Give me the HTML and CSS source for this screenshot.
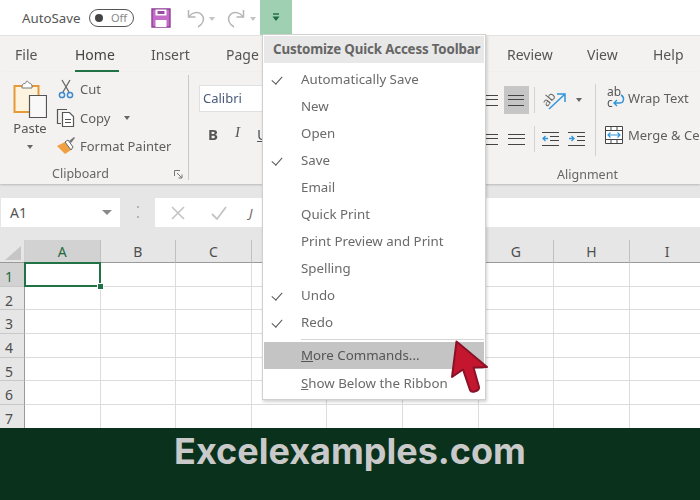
FILE: index.html
```html
<!DOCTYPE html>
<html lang="en">
<head>
<meta charset="utf-8">
<title>Customize Quick Access Toolbar</title>
<link rel="stylesheet" href="styles.css">
</head>
<body>
<div class="app">
  <header class="qat">
    <span class="autosave">AutoSave</span>
    <span class="toggle"><i class="knob"></i><span>Off</span></span>
    <svg class="save" width="20" height="20" viewBox="0 0 20 20"><path d="M1 1h18v18H1z" fill="#c46cc8" stroke="#8d3f95" stroke-width="1.4"/><path d="M4.500 1.500h11v6h-11z" fill="#fff"/><path d="M4.500 12h11v7h-11z" fill="#fff"/><path d="M6.500 3h7v3h-7z" fill="#9a4ca2"/></svg>
    <svg class="undo" width="18" height="20" viewBox="0 0 18 20" fill="none" stroke="#b5b5b5" stroke-width="1.500"><path d="M1.500 2v7h7"/><path d="M2 9c3-5 10-6 13-2s1 9-4 12"/></svg>
    <i class="caret light"></i>
    <svg class="redo" width="18" height="20" viewBox="0 0 18 20" fill="none" stroke="#b5b5b5" stroke-width="1.500"><path d="M16.500 2v7h-7"/><path d="M16 9c-3-5-10-6-13-2s-1 9 4 12"/></svg>
    <i class="caret light"></i>
    <span class="qat-btn"><svg width="8" height="9" viewBox="0 0 8 9"><path d="M1 1h6" stroke="#1d6b3f" stroke-width="1.400"/><path d="M.5 3.500h7L4 8z" fill="#1d6b3f"/></svg></span>
  </header>

  <nav class="tabs">
    <span class="tab t-file">File</span>
    <span class="tab t-home">Home</span>
    <span class="tab t-insert">Insert</span>
    <span class="tab t-page">Page</span>
    <span class="tab t-review">Review</span>
    <span class="tab t-view">View</span>
    <span class="tab">Help</span>
  </nav>

  <section class="ribbon">
    <div class="group clipboard">
      <div class="group-body">
        <div class="paste">
          <svg width="34" height="38" viewBox="0 0 34 38"><path d="M1.500 6h24v26h-24z" fill="#fdf3df" stroke="#e59a37" stroke-width="2"/><path d="M9 6c0-2 2-2.500 3-2.500S13 1 14 1s2 2.500 3 2.500 2 1 2 2.500v2H9z" fill="#fff" stroke="#777" stroke-width="1"/><path d="M16.500 15.500h17v22h-17z" fill="#f8f8f8" stroke="#555" stroke-width="1.200"/></svg>
          <span class="paste-label">Paste</span>
          <i class="caret"></i>
        </div>
        <div class="clip-list">
          <div class="clip-row"><svg class="ci" width="20" height="20" viewBox="0 0 20 20" fill="none"><path d="M6 1l7 12M14 1L7 13" stroke="#666" stroke-width="1.300"/><circle cx="6" cy="16" r="2.600" stroke="#3b8ad0" stroke-width="1.500"/><circle cx="14" cy="16" r="2.600" stroke="#3b8ad0" stroke-width="1.500"/></svg><span>Cut</span></div>
          <div class="clip-row"><svg class="ci" width="20" height="20" viewBox="0 0 20 20" fill="none" stroke="#555" stroke-width="1.200"><path d="M5 15.500H1.500v-14H11"/><path d="M6.500 4.500h7l4 4v10h-11z" fill="#fff"/><path d="M9 11.500h6M9 14.500h6" stroke-width="1"/></svg><span>Copy</span><i class="caret copy-caret"></i></div>
          <div class="clip-row"><svg class="ci" width="20" height="20" viewBox="0 0 20 20"><path d="M1 10l8-4 6 8-6 4z" fill="#f0a040"/><path d="M9 6l6 8 2-3-5-7z" fill="#fff" stroke="#666"/><path d="M13 5l5-4 1 1-4 5z" fill="#777"/></svg><span>Format Painter</span></div>
        </div>
      </div>
      <div class="group-label">Clipboard<svg class="launcher" width="9" height="9" viewBox="0 0 9 9" fill="none" stroke="#777"><path d="M.5 6V.5H6"/><path d="M3 3l5 5M8 4.500V8H4.500"/></svg></div>
    </div>

    <div class="group font">
      <div class="font-box">Calibri</div>
      <div class="font-btns"><b>B</b><i>I</i><u>U</u></div>
    </div>

    <div class="group alignment">
      <div class="align-body">
        <div class="align-grid">
          <span class="ai"><i class="l3"></i></span>
          <span class="ai sel"><i class="l3"></i></span>
          <span class="vsep"></span>
          <span class="orient"><svg class="free" width="30" height="24" viewBox="0 0 30 24" fill="none"><text x="0" y="16" class="ab" transform="rotate(-50 6 12)">ab</text><path d="M7 21L22 7M15 6h8v8" stroke="#2f95dc" stroke-width="1.500"/></svg><i class="caret"></i></span>
          <span class="ai"><i class="l3"></i></span>
          <span class="ai"><i class="l3 wide"></i></span>
          <span class="vsep"></span>
          <span class="indents">
            <svg width="17" height="16" viewBox="0 0 17 16" fill="none" stroke="#444"><path d="M0 1.500h17M8 5.500h9M8 9.500h9M0 14.500h17"/><path d="M6 7.500H1M3.500 5L1 7.500 3.500 10" stroke="#2f95dc" stroke-width="1.300"/></svg>
            <svg width="17" height="16" viewBox="0 0 17 16" fill="none" stroke="#444"><path d="M0 1.500h17M9 5.500h8M9 9.500h8M0 14.500h17"/><path d="M1 7.500h5M3.500 5L6 7.500 3.500 10" stroke="#2f95dc" stroke-width="1.300"/></svg>
          </span>
        </div>
        <div class="wrap-col">
          <div class="wrap-row"><svg class="free" width="18" height="22" viewBox="0 0 18 22" fill="none"><text x="0" y="9" class="abc">ab</text><text x="0" y="20" class="abc">c</text><path d="M14 8c4 2 3 8-1 8H7M10 13l-3 3 3 3" stroke="#2f95dc" stroke-width="1.400"/></svg><span>Wrap Text</span></div>
          <div class="wrap-row merge"><svg width="18" height="18" viewBox="0 0 18 18" fill="none"><path d="M.5.500h17v17H.5z" fill="#fff" stroke="#444"/><path d="M.5 4.500h17M.5 13.500h17M6 .5v4M12 .5v4M6 13.500v4M12 13.500v4" stroke="#444"/><path d="M3 9h12M5.500 6.500L3 9l2.500 2.500M12.500 6.500L15 9l-2.500 2.500" stroke="#2f95dc" stroke-width="1.200"/></svg><span>Merge &amp; Center</span></div>
        </div>
      </div>
      <div class="group-label">Alignment</div>
    </div>
  </section>

  <section class="formula">
    <div class="namebox"><span>A1</span><i class="caret dark"></i></div>
    <span class="dots"></span>
    <div class="fx">
      <svg width="14" height="14" viewBox="0 0 14 14" stroke="#c4c4c4" stroke-width="1.600" fill="none"><path d="M1 1l12 12M13 1L1 13"/></svg>
      <svg width="16" height="14" viewBox="0 0 16 14" stroke="#c4c4c4" stroke-width="1.800" fill="none"><path d="M1 8l5 5L15 1"/></svg>
      <span class="fx-j">J</span>
    </div>
  </section>

  <section class="sheet">
    <div class="corner"><svg width="16" height="14" viewBox="0 0 16 14"><path d="M16 0v14H0z" fill="#c6c6c6"/></svg></div>
    <div class="ch sel">A</div><div class="ch">B</div><div class="ch">C</div><div class="ch"></div><div class="ch"></div><div class="ch"></div><div class="ch">G</div><div class="ch">H</div><div class="ch">I</div>

    <div class="rh sel">1</div><div class="c active"></div><div class="c"></div><div class="c"></div><div class="c"></div><div class="c"></div><div class="c"></div><div class="c"></div><div class="c"></div><div class="c"></div>
    <div class="rh">2</div><div class="c"></div><div class="c"></div><div class="c"></div><div class="c"></div><div class="c"></div><div class="c"></div><div class="c"></div><div class="c"></div><div class="c"></div>
    <div class="rh">3</div><div class="c"></div><div class="c"></div><div class="c"></div><div class="c"></div><div class="c"></div><div class="c"></div><div class="c"></div><div class="c"></div><div class="c"></div>
    <div class="rh">4</div><div class="c"></div><div class="c"></div><div class="c"></div><div class="c"></div><div class="c"></div><div class="c"></div><div class="c"></div><div class="c"></div><div class="c"></div>
    <div class="rh">5</div><div class="c"></div><div class="c"></div><div class="c"></div><div class="c"></div><div class="c"></div><div class="c"></div><div class="c"></div><div class="c"></div><div class="c"></div>
    <div class="rh">6</div><div class="c"></div><div class="c"></div><div class="c"></div><div class="c"></div><div class="c"></div><div class="c"></div><div class="c"></div><div class="c"></div><div class="c"></div>
    <div class="rh">7</div><div class="c"></div><div class="c"></div><div class="c"></div><div class="c"></div><div class="c"></div><div class="c"></div><div class="c"></div><div class="c"></div><div class="c"></div>
  </section>

  <aside class="menu">
    <div class="menu-head">Customize Quick Access Toolbar</div>
    <ul class="menu-list">
      <li class="on">Automatically Save</li>
      <li>New</li>
      <li>Open</li>
      <li class="on">Save</li>
      <li>Email</li>
      <li>Quick Print</li>
      <li>Print Preview and Print</li>
      <li>Spelling</li>
      <li class="on">Undo</li>
      <li class="on">Redo</li>
      <li class="sep"></li>
      <li class="hot"><u>M</u>ore Commands...</li>
      <li class="last"><u>S</u>how Below the Ribbon</li>
    </ul>
  </aside>

  <svg class="pointer" width="40" height="56" viewBox="0 0 40 56"><path d="M7.500 1.500L3 37l11-7.500 7 20.500c1.500 3.500 9.500 1 9-3l-5.500-19.500 13.500-.5z" fill="#c4162f" stroke="#8a1226" stroke-width="2" stroke-linejoin="round"/></svg>
</div>
<footer class="brand">Excelexamples.com</footer>
</body>
</html>
```
FILE: styles.css
```css
* { box-sizing: border-box; }
html, body { margin: 0; padding: 0; }
body {
  width: 700px;
  height: 500px;
  overflow: hidden;
  font-family: "Noto Sans", "Liberation Sans", sans-serif;
  color: #555;
  background: #fff;
}
.app {
  position: relative;
  height: 428px;
  overflow: hidden;
  display: flex;
  flex-direction: column;
  filter: blur(0.35px);
}
.free { overflow: visible; }
.caret {
  display: inline-block;
  width: 0;
  height: 0;
  border-left: 3.5px solid transparent;
  border-right: 3.5px solid transparent;
  border-top: 4px solid #666;
}
.caret.light { border-top-color: #c4c4c4; }
.caret.dark { border-left-width: 5px; border-right-width: 5px; border-top-width: 5px; border-top-color: #8a8a8a; }

/* Quick access toolbar */
.qat {
  height: 35px;
  flex: none;
  display: flex;
  align-items: center;
  padding-left: 22px;
  font-size: 13.300px;
  background: #fff;
}
.autosave { width: 67px; color: #555; }
.toggle {
  width: 45px;
  height: 18px;
  border: 1.5px solid #555;
  border-radius: 9px;
  display: flex;
  align-items: center;
  padding-left: 5px;
  gap: 8px;
  font-size: 11px;
  color: #888;
}
.knob { width: 8px; height: 8px; border-radius: 50%; background: #444; }
.save { margin-left: 17px; margin-top: 1px; }
.undo { margin-left: 16px; }
.qat .caret { margin: 2px 0 0 4px; }
.redo { margin-left: 12px; }
.qat .redo + .caret { margin-left: 5px; }
.qat-btn {
  width: 32px;
  height: 35px;
  margin-left: 4px;
  background: #9fd0b1;
  display: flex;
  align-items: center;
  justify-content: center;
}

/* Tabs */
.tabs {
  height: 37px;
  flex: none;
  display: flex;
  align-items: center;
  padding: 2px 0 0 15px;
  font-size: 14px;
  line-height: 20px;
  background: #f3f2f1;
  border-top: 1px solid #e2e2e2;
  white-space: nowrap;
}
.tab { display: block; position: relative; }
.t-file { width: 60px; }
.t-home { width: 76px; color: #444; }
.t-home::after {
  content: "";
  position: absolute;
  left: 0;
  width: 44px;
  top: 25px;
  height: 3px;
  background: #217346;
}
.t-insert { width: 75px; }
.t-page { width: 281px; }
.t-review { width: 80px; }
.t-view { width: 66px; }

/* Ribbon */
.ribbon {
  height: 112px;
  flex: none;
  display: flex;
  background: #f3f2f1;
  box-shadow: 0 1px 2px rgba(0, 0, 0, .2);
  position: relative;
}
.group { display: flex; flex-direction: column; }
.group-body { flex: 1; display: flex; padding-left: 13px; }
.group-label {
  height: 22px;
  margin-bottom: -1px;
  display: flex;
  align-items: center;
  justify-content: center;
  font-size: 12.500px;
  color: #666;
  position: relative;
}
.clipboard {
  width: 189px;
  flex: none;
  border-right: 1.500px solid #c8c8c8;
  margin: 3px 0 4px;
}
.clipboard .group-label { margin-bottom: -4px; padding-right: 27px; }
.launcher { position: absolute; right: 5px; top: 8px; }
.paste {
  width: 34px;
  display: flex;
  flex-direction: column;
  align-items: center;
  padding-top: 5px;
}
.paste svg { flex: none; }
.paste-label { font-size: 13px; line-height: 18px; margin-top: 1px; }
.paste .caret { margin-top: 8px; }
.clip-list {
  margin-left: 9px;
  display: flex;
  flex-direction: column;
}
.clip-row {
  height: 28.500px;
  display: flex;
  align-items: center;
  font-size: 13px;
  color: #5e5e5e;
}
.ci { margin-right: 4px; flex: none; }
.copy-caret { margin-left: 14px; }
.font { width: 286px; flex: none; padding: 13px 0 0 10px; }
.font-box {
  width: 100px;
  height: 27px;
  background: #fff;
  border: 1px solid #e0e0e0;
  font-size: 13px;
  line-height: 25px;
  padding-left: 3px;
  color: #4a5a78;
}
.font-btns {
  display: flex;
  gap: 17px;
  padding: 12px 0 0 9px;
  font-size: 15px;
  color: #555;
}
.font-btns i { font-family: "Liberation Serif", serif; }

.alignment { flex: 1; min-width: 0; }
.align-body { flex: 1; display: flex; padding-top: 12px; }
.alignment .group-label { width: 225px; }
.align-grid {
  display: grid;
  grid-template-columns: 26px 26px 11px 62px;
  grid-auto-rows: 30px;
  row-gap: 9px;
  align-items: center;
  justify-items: center;
  width: 116px;
  margin-left: 2px;
  margin-top: 1px;
}
.ai {
  width: 25px;
  height: 28px;
  display: flex;
  align-items: center;
  justify-content: center;
}
.ai.sel { background: #c6c6c6; }
.l3 {
  display: block;
  width: 16px;
  height: 11px;
  border-top: 1.300px solid #444;
  border-bottom: 1.300px solid #444;
  position: relative;
}
.l3::after {
  content: "";
  position: absolute;
  left: 0;
  right: 0;
  top: 3.500px;
  height: 1.300px;
  background: #444;
}
.l3.wide { width: 17px; }
.vsep { width: 1.500px; height: 26px; background: #d2d2d2; }
.orient { display: flex; align-items: center; gap: 4px; justify-self: start; padding-left: 2px; }
.ab { font-size: 12px; fill: #666; }
.abc { font-size: 12px; fill: #555; }
.indents { display: flex; gap: 9px; justify-self: start; padding-left: 2px; }
.wrap-col {
  height: 72px;
  border-left: 1.500px solid #d0d0d0;
  margin-left: 2px;
  padding-left: 9px;
  display: flex;
  flex-direction: column;
  gap: 15px;
  padding-top: 3px;
  white-space: nowrap;
}
.wrap-row {
  height: 22px;
  display: flex;
  align-items: center;
  gap: 3px;
  font-size: 13px;
  color: #5e5e5e;
  padding-left: 2px;
}
.wrap-row.merge { padding-left: 0; gap: 5px; }

/* Formula bar */
.formula {
  height: 56px;
  flex: none;
  padding-top: 14px;
  display: flex;
  background: #e6e6e6;
}
.namebox {
  width: 119px;
  height: 29px;
  margin-left: 1px;
  background: #fff;
  display: flex;
  align-items: center;
  justify-content: space-between;
  padding: 0 8px 0 9px;
  font-size: 14px;
  color: #555;
}
.dots {
  width: 2px;
  height: 12px;
  margin: 8px 16px 0 17px;
  border-top: 2px solid #b5b5b5;
  border-bottom: 2px solid #b5b5b5;
}
.fx {
  flex: 1;
  height: 29px;
  background: #fff;
  display: flex;
  align-items: center;
  padding-left: 16px;
  gap: 26px;
  font-size: 13px;
}
.fx-j { font-style: italic; margin-left: -4px; color: #666; }

/* Sheet */
.sheet {
  flex: none;
  display: grid;
  grid-template-columns: 25px repeat(9, 75.600px);
  grid-template-rows: 23px repeat(7, 23.700px);
  background: #fff;
}
.corner {
  background: #e6e6e6;
  border-bottom: 1px solid #9a9a9a;
  border-right: 1px solid #cfcfcf;
  display: flex;
  align-items: flex-end;
  justify-content: flex-end;
  padding: 0 3px 2px 0;
}
.ch {
  background: #e6e6e6;
  border-right: 1px solid #c0c0c0;
  border-bottom: 1.500px solid #9a9a9a;
  text-align: center;
  font-size: 14px;
  line-height: 24px;
  color: #4e4e4e;
}
.ch.sel { background: #d2d2d2; color: #1f6b40; border-bottom: 0; }
.rh {
  background: #e6e6e6;
  border-right: 1.500px solid #9a9a9a;
  border-bottom: 1px solid #c8c8c8;
  text-align: center;
  font-size: 14px;
  line-height: 27px;
  color: #4e4e4e;
  padding-right: 6px;
}
.rh.sel { background: #d2d2d2; color: #1f6b40; }
.c { border-right: 1.300px solid #dcdcdc; border-bottom: 1.300px solid #dcdcdc; }
.c.active { position: relative; }
.c.active::before {
  content: "";
  position: absolute;
  left: -1px;
  top: -1px;
  right: -1px;
  bottom: -1px;
  border: 2px solid #217346;
}
.c.active::after {
  content: "";
  position: absolute;
  right: -4px;
  bottom: -4px;
  box-sizing: content-box;
  width: 5px;
  height: 5px;
  background: #217346;
  border: 1px solid #fff;
}

/* Menu overlay */
.menu {
  position: absolute;
  left: 262px;
  top: 34px;
  width: 224px;
  height: 366px;
  background: #fff;
  border: 1px solid #d0d0d0;
  box-shadow: 1px 2px 3px rgba(0, 0, 0, .18);
  padding: 1px;
}
.menu-head {
  height: 27px;
  background: #e8e8e8;
  font-size: 13.300px;
  font-weight: 700;
  line-height: 27px;
  padding-left: 9px;
  color: #666;
  white-space: nowrap;
  letter-spacing: -.15px;
}
.menu-list {
  list-style: none;
  margin: 3px 0 0;
  padding: 0;
  font-size: 13.300px;
  color: #6a6a6a;
}
.menu-list li {
  height: 27px;
  line-height: 27px;
  padding-left: 37px;
  position: relative;
}
.menu-list li.on::before {
  content: "";
  position: absolute;
  left: 10px;
  top: 8px;
  width: 5px;
  height: 9px;
  border-right: 1.800px solid #555;
  border-bottom: 1.800px solid #555;
  transform: rotate(42deg);
}
.menu-list li.sep {
  height: 1px;
  background: #d6d6d6;
  margin: 3px 0 2px 37px;
  padding: 0;
}
.menu-list li.hot { background: #c4c4c4; color: #555; }
.menu-list li.last { margin-top: 1px; }

.pointer { position: absolute; left: 449px; top: 340px; }

/* Footer */
.brand {
  height: 72px;
  background: #0a311b;
  color: #c9c9c9;
  font-family: Inter, Roboto, "Liberation Sans", sans-serif;
  font-weight: 700;
  font-size: 36px;
  text-align: center;
  line-height: 46px;
}
```
